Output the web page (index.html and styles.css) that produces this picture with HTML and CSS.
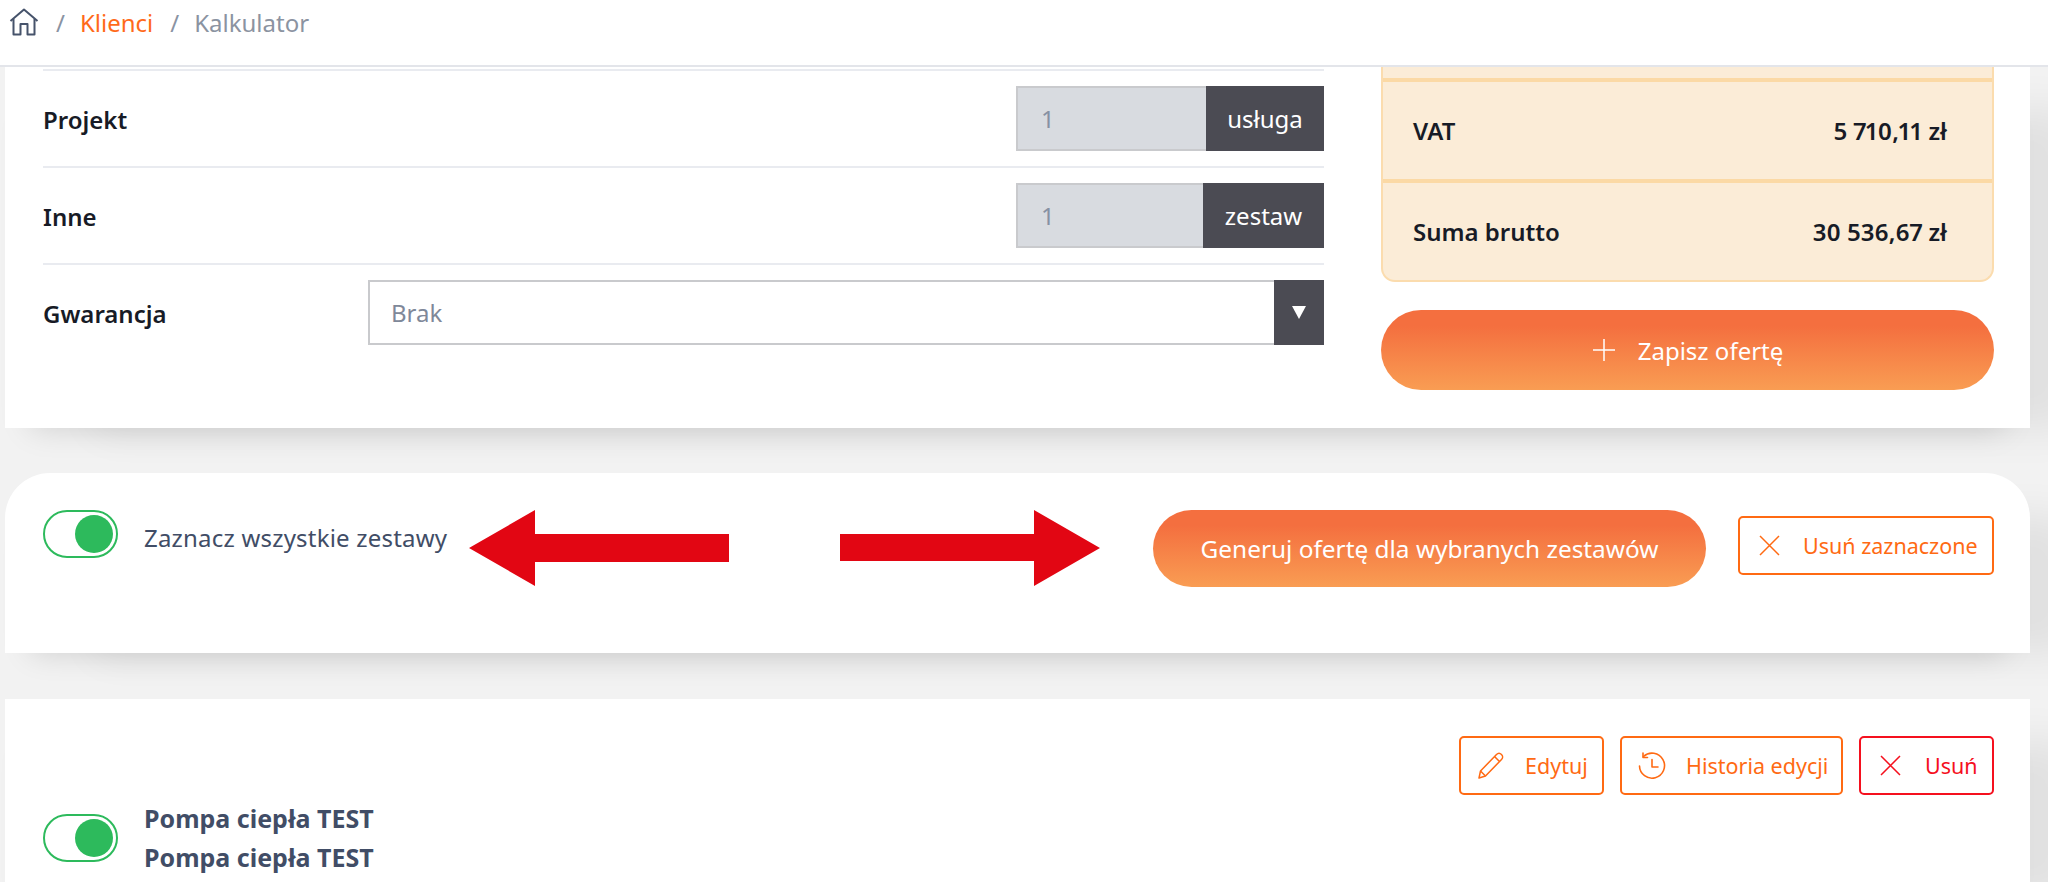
FILE: index.html

```html
<!DOCTYPE html>
<html lang="pl">
<head>
    <meta charset="UTF-8">
    <meta name="viewport" content="width=device-width, initial-scale=1.0">
    <title>Kalkulator - Klienci</title>
    <link rel="stylesheet" href="styles.css">
</head>
<body>
    <header class="topbar">
        <svg class="home-icon" viewBox="0 0 30 28" fill="none" stroke="#46536b" stroke-width="2" stroke-linejoin="round">
            <path d="M1.5 13 15 1.5 28.500 13"/>
            <path d="M4.500 11V26.500H11.500V16H18.500V26.500H25.500V11"/>
        </svg>
        <span class="sep">/</span>
        <a class="crumb-link" href="#">Klienci</a>
        <span class="sep">/</span>
        <span class="crumb">Kalkulator</span>
    </header>

    <main class="content">
        <section class="card calc-card">
            <div class="calc-left">
                <div class="row">
                    <span class="row-label">Projekt</span>
                    <div class="qty">
                        <input class="qty-input" type="text" value="1" disabled>
                        <span class="addon">usługa</span>
                    </div>
                </div>
                <div class="row">
                    <span class="row-label">Inne</span>
                    <div class="qty">
                        <input class="qty-input qty-input-short" type="text" value="1" disabled>
                        <span class="addon">zestaw</span>
                    </div>
                </div>
                <div class="row">
                    <span class="row-label">Gwarancja</span>
                    <div class="select">
                        <span class="select-value">Brak</span>
                        <span class="select-arrow"></span>
                    </div>
                </div>
            </div>
            <div class="calc-right">
                <div class="summary">
                    <div class="summary-top"></div>
                    <div class="summary-row"><span>VAT</span><span>5 710,11 zł</span></div>
                    <div class="summary-row"><span>Suma brutto</span><span>30 536,67 zł</span></div>
                </div>
                <button class="btn-gradient btn-save">
                    <svg class="plus-icon" viewBox="0 0 24 24" fill="none" stroke="#fff" stroke-width="1.500">
                        <path d="M12 1V23M1 12H23"/>
                    </svg>
                    Zapisz ofertę
                </button>
            </div>
        </section>

        <section class="card select-card">
            <span class="toggle"><span class="toggle-knob"></span></span>
            <span class="select-label">Zaznacz wszystkie zestawy</span>
            <div class="select-actions">
                <button class="btn-gradient btn-generate">Generuj ofertę dla wybranych zestawów</button>
                <button class="btn-outline btn-remove-selected">
                    <svg class="x-icon" viewBox="0 0 21 21" fill="none" stroke="currentColor" stroke-width="1.500">
                        <path d="M1 1 20 20M20 1 1 20"/>
                    </svg>
                    Usuń zaznaczone
                </button>
            </div>
            <svg class="arrow arrow-left" viewBox="0 0 260 76" fill="#e20613">
                <path d="M0 38 66 0V24H260V52H66V76Z"/>
            </svg>
            <svg class="arrow arrow-right" viewBox="0 0 260 76" fill="#e20613">
                <path d="M260 38 194 0V24H0V51H194V76Z"/>
            </svg>
        </section>

        <section class="card set-card">
            <div class="set-actions">
                <button class="btn-outline btn-edit">
                    <svg class="btn-icon" viewBox="0 0 28 28" fill="none" stroke="currentColor" stroke-width="1.500" stroke-linejoin="round">
                        <path d="M2 26 3.500 19 19.500 2.500C21 1 23 1 24.500 2.500 26 4 26 6 24.500 7.500L8.500 24Z"/>
                        <path d="M3.500 19 8.500 24M17.500 4.500 22.500 9.500"/>
                    </svg>
                    Edytuj
                </button>
                <button class="btn-outline btn-history">
                    <svg class="btn-icon" viewBox="0 0 28 28" fill="none" stroke="currentColor" stroke-width="1.600" stroke-linecap="round" stroke-linejoin="round">
                        <path d="M5.500 4.500A12.500 12.500 0 1 1 1.500 14"/>
                        <path d="M5 1V5.500H9.500"/>
                        <path d="M14 7.500V15H20"/>
                    </svg>
                    Historia edycji
                </button>
                <button class="btn-outline btn-danger">
                    <svg class="x-icon" viewBox="0 0 21 21" fill="none" stroke="currentColor" stroke-width="1.500">
                        <path d="M1 1 20 20M20 1 1 20"/>
                    </svg>
                    Usuń
                </button>
            </div>
            <div class="set-info">
                <span class="toggle"><span class="toggle-knob"></span></span>
                <div class="set-names">
                    <div>Pompa ciepła TEST</div>
                    <div>Pompa ciepła TEST</div>
                </div>
            </div>
        </section>
    </main>
</body>
</html>
```

FILE: styles.css

```css
* {
    margin: 0;
    padding: 0;
    box-sizing: border-box;
    font-family: 'Noto Sans', 'Open Sans', sans-serif;
}

html, body {
    height: 882px;
    overflow: hidden;
}

body {
    background-color: #f2f2f2;
    width: 2048px;
}

/* breadcrumb */
.topbar {
    height: 67px;
    background-color: #fff;
    border-bottom: 2px solid #e3e5ea;
    display: flex;
    align-items: flex-start;
    padding: 7px 0 0 9px;
    font-size: 24px;
    line-height: 32px;
    position: relative;
    z-index: 2;
}

.home-icon {
    width: 30px;
    height: 28px;
    margin-top: 1px;
}

.sep {
    color: #8a93a3;
    margin: 0 15px 0 17px;
}

.crumb-link {
    color: #ff6a1a;
    text-decoration: none;
}

.crumb {
    color: #8b93a1;
}

.content {
    padding: 0 18px 0 5px;
    display: flex;
    flex-direction: column;
    gap: 45px;
}

.card {
    background-color: #fff;
    box-shadow: 70px 22px 40px -20px rgba(0, 0, 0, 0.07), 0 26px 30px -26px rgba(0, 0, 0, 0.15);
}

/* calculator */
.calc-card {
    display: flex;
    gap: 57px;
    padding: 2px 36px 0 38px;
    height: 361px;
}

.calc-left {
    flex: 1;
}

.calc-right {
    width: 613px;
    margin-top: -2px;
}

.row {
    display: flex;
    align-items: center;
    justify-content: space-between;
    border-top: 2px solid #e9ebf0;
    padding: 15px 0;
    height: 97px;
}

.row-label {
    font-size: 24px;
    font-weight: 600;
    color: #171b26;
    margin-top: 2px;
}

.qty {
    display: flex;
    height: 65px;
}

.qty-input {
    width: 190px;
    height: 65px;
    background-color: #d8dbe0;
    border: 2px solid #c9cacd;
    border-right: none;
    padding-left: 23px;
    font-size: 24px;
    color: #8791a3;
    outline: none;
}

.qty-input-short {
    width: 187px;
}

.addon {
    background-color: #4b4b53;
    color: #fff;
    font-size: 24px;
    display: flex;
    align-items: center;
    justify-content: center;
    width: 118px;
}

.qty-input-short + .addon {
    width: 121px;
}

.select {
    width: 956px;
    height: 65px;
    border: 2px solid #c9cacd;
    border-right: none;
    display: flex;
    align-items: center;
    justify-content: space-between;
}

.select-value {
    padding-left: 21px;
    font-size: 24px;
    color: #7f8899;
}

.select-arrow {
    width: 50px;
    height: 65px;
    background-color: #4b4b53;
    margin: -2px 0;
    display: flex;
    align-items: center;
    justify-content: center;
}

.select-arrow::after {
    content: '';
    border-left: 7px solid transparent;
    border-right: 7px solid transparent;
    border-top: 13px solid #fff;
}

.summary {
    background-color: #fbecd7;
    border: 2px solid #fbdcae;
    border-top: none;
    border-radius: 0 0 14px 14px;
    height: 215px;
}

.summary-top {
    height: 11px;
}

.summary-row {
    border-top: 4px solid #fbd9a5;
    height: 101px;
    display: flex;
    align-items: center;
    justify-content: space-between;
    padding: 0 45px 0 30px;
    font-size: 24px;
    font-weight: 600;
    font-variant-numeric: proportional-nums;
    color: #171b26;
}

.btn-gradient {
    border: none;
    border-radius: 40px;
    background: linear-gradient(180deg, #f46f3f 20%, #f99d53 100%);
    color: #fff;
    font-size: 24px;
    display: flex;
    align-items: center;
    justify-content: center;
    cursor: pointer;
}

.btn-save {
    width: 100%;
    height: 80px;
    margin-top: 28px;
    gap: 22px;
}

.plus-icon {
    width: 24px;
    height: 24px;
}

/* select all */
.select-card {
    position: relative;
    display: flex;
    align-items: flex-start;
    height: 180px;
    padding: 37px 36px 0 38px;
    border-radius: 45px 45px 0 0;
}

.toggle {
    width: 75px;
    height: 48px;
    border: 2px solid #2dba5c;
    border-radius: 24px;
    display: flex;
    align-items: center;
    justify-content: flex-end;
    padding-right: 3px;
    flex-shrink: 0;
}

.toggle-knob {
    width: 38px;
    height: 38px;
    border-radius: 50%;
    background-color: #2dba5c;
}

.select-label {
    font-size: 24px;
    letter-spacing: 0.2px;
    color: #414d66;
    margin: 11px 0 0 26px;
}

.select-actions {
    margin-left: auto;
    display: flex;
    align-items: flex-start;
    gap: 32px;
}

.btn-generate {
    width: 553px;
    height: 77px;
    font-size: 24.400px;
}

.arrow {
    position: absolute;
    top: 37px;
    width: 260px;
    height: 76px;
}

.arrow-left {
    left: 464px;
}

.arrow-right {
    left: 835px;
}

.btn-outline {
    height: 59px;
    padding: 0 0 0 16px;
    border: 2px solid #ff6a13;
    border-radius: 5px;
    background-color: #fff;
    color: #ff6a13;
    font-size: 21.500px;
    display: flex;
    align-items: center;
    gap: 20px;
    cursor: pointer;
}

.btn-remove-selected {
    margin-top: 6px;
    width: 256px;
    padding-left: 19px;
    gap: 23px;
}

.btn-edit {
    width: 145px;
}

.btn-history {
    width: 223px;
}

.btn-danger {
    width: 135px;
    padding-left: 19px;
    gap: 24px;
    border-color: #f5101e;
    color: #f5101e;
}

.btn-icon {
    width: 28px;
    height: 28px;
}

.x-icon {
    width: 21px;
    height: 21px;
}

/* set */
.set-card {
    height: 200px;
    margin-top: 1px;
    padding: 37px 36px 0 38px;
}

.set-actions {
    display: flex;
    justify-content: flex-end;
    gap: 16px;
}

.set-info {
    display: flex;
    align-items: center;
    gap: 26px;
    margin-top: 4px;
}

.set-names {
    font-size: 25px;
    font-weight: 700;
    line-height: 39px;
    color: #414d66;
}
```
